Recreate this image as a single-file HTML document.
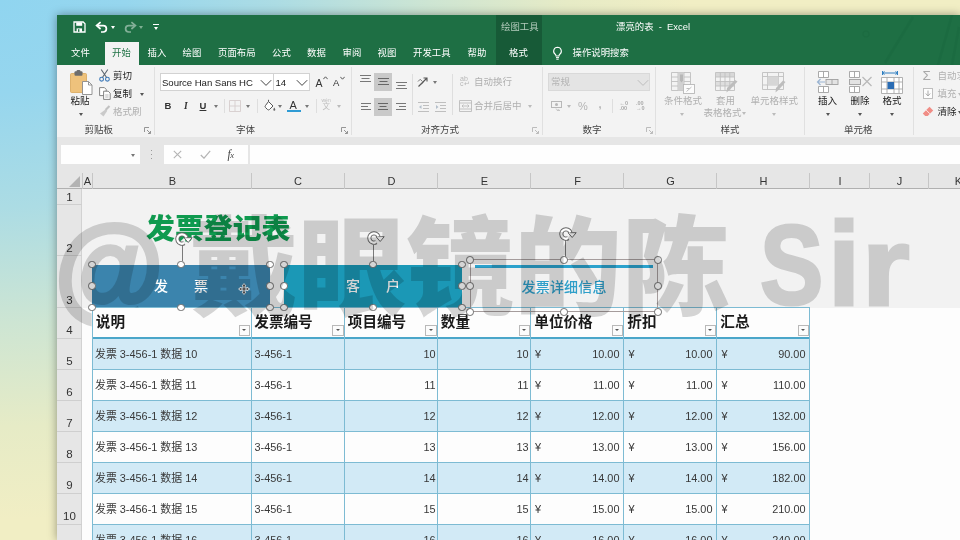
<!DOCTYPE html>
<html lang="zh-CN">
<head>
<meta charset="utf-8">
<title>漂亮的表 - Excel</title>
<style>
*{box-sizing:border-box;margin:0;padding:0}
html,body{width:960px;height:540px;overflow:hidden}
body{position:relative;font-family:"Liberation Sans","Noto Sans CJK SC",sans-serif;font-size:10px;color:#222;
 background:#f1eec4 radial-gradient(ellipse 690px 520px at 0 0,#90d5f0 0%,#96d6ee 18%,#acdce4 40%,#cde5d3 62%,#e6ebc6 82%,#f1eec4 100%);}
#win{position:absolute;left:57px;top:15px;width:903px;height:525px;background:#fdfdfd;box-shadow:0 0 9px rgba(0,0,0,.38);overflow:hidden}
#pg{position:absolute;left:-57px;top:-15px;width:960px;height:540px;will-change:transform}
#pg div,#pg span,#pg svg{position:absolute}
.t{white-space:nowrap;line-height:14px;height:14px}
/* title + tabs */
#titlebar{left:57px;top:15px;width:903px;height:50px;background:#1e6f44}
#ctx{left:496px;top:15px;width:45.5px;height:50px;background:#175a37}
#tabactive{left:105px;top:42px;width:34px;height:23px;background:#f3f3f3}
.tab{top:45.9px;color:#fff;font-size:9.4px}
/* ribbon */
#ribbon{left:57px;top:65px;width:903px;height:72px;background:#f3f3f3}
.gl{top:123px;font-size:9.5px;color:#444}
.rt{font-size:9.5px;color:#222}
.dis{color:#b0b0b0}
.sep{top:67px;width:1px;height:68px;background:#e0e0e0}
.vs{width:1px;height:14px;background:#dedede}
.dd{width:0;height:0;border-left:2.5px solid transparent;border-right:2.5px solid transparent;border-top:3px solid #555}
.dd.g{border-top-color:#bbb}
/* formula bar */
#fbar{left:57px;top:137px;width:903px;height:35px;background:#e6e6e6}
.wb{background:#fefefe;top:145.4px;height:18.8px}
/* grid */
#colhead{left:57px;top:172px;width:903px;height:17px;background:#e6e6e6;border-bottom:1px solid #b0b0b0}
.ch{top:174px;font-size:11px;color:#333;width:20px;text-align:center;margin-left:-10px}
.cs{top:172.5px;width:1px;height:16px;background:#c6c6c6}
#rowhead{left:57px;top:189px;width:25px;height:351px;background:#e6e6e6;border-right:1px solid #d2d2d2}
.rh{left:57px;width:25px;text-align:center;font-size:11.5px;margin-top:.5px;color:#333}
.rs{left:57px;width:25px;height:1px;background:#cfcfcf}
#graysheet{left:82px;top:189px;width:878px;height:118.5px;background:#f2f2f2}

/* table */
#tbl{left:92px;top:307px;width:718px;height:233px;background:#fdfdfd}
.band{left:92.5px;width:717px;height:31px;background:#d2eaf6}
.hl{left:92px;width:718px;height:1px;background:#7dbbd3}
.vl{top:307px;width:1px;height:233px;background:#7dbbd3}
.th{top:313.4px;margin-left:.3px;font-size:14.6px;font-weight:bold;color:#1a1a1a;line-height:18px;height:18px;white-space:nowrap}
.fb{margin-left:1px;top:324.7px;width:11.5px;height:11.5px;background:#fcfcfc;border:1px solid #b9b9b9}
.fb:after{content:"";position:absolute;left:2.5px;top:3.8px;border-left:2.3px solid transparent;border-right:2.3px solid transparent;border-top:2.8px solid #555}
.td{font-size:10.9px;color:#383838;line-height:16px;height:16px;white-space:nowrap}
.r{text-align:right}

/* shapes */
#ttl{left:146px;top:207.8px;font-size:28.9px;font-weight:900;color:#0f9a4f;line-height:42px;height:42px;white-space:nowrap}
.btn{top:264.5px;width:178px;height:42.5px;color:#fff;font-size:14px;font-weight:500;line-height:43px;text-align:center;white-space:pre;word-spacing:.45px}
.hd{width:7.6px;height:7.6px;margin:-3.8px 0 0 -3.8px;border-radius:50%;background:#fff;border:1px solid #6b6b6b}
.rl{width:1px;background:#7a7a7a;margin-left:-.5px}
.rot{margin:-8px 0 0 -8px}
#wm{left:0;top:0;width:960px;height:540px;opacity:.16;color:#000;font-weight:900;font-size:112px;pointer-events:none}
#wm span{white-space:nowrap;line-height:112px;height:112px}
#wm .lat{-webkit-text-stroke:3px #000}
</style>
</head>
<body>
<div id="win"><div id="pg">
 <div id="titlebar"></div>
 <div id="ctx"></div>
 <div id="tabactive"></div>
 <!--TITLE-->
 <svg style="left:860px;top:15px" width="100" height="50" viewBox="0 0 100 50"><path d="M53 2 25 48M92 0 78 50M99 12 92 50" stroke="#18633d" stroke-width="2.5" fill="none" opacity=".3"/><circle cx="6" cy="19" r="3" fill="none" stroke="#18633d" stroke-width="1.2" opacity=".3"/></svg>
 <!-- quick access toolbar -->
 <svg style="left:73px;top:21px" width="13" height="12" viewBox="0 0 13 12"><path d="M1 1h9.2l1.8 1.8V11H1z" fill="none" stroke="#fff" stroke-width="1.3"/><rect x="3.2" y="1.4" width="6" height="3.4" fill="#fff"/><rect x="3.6" y="7.4" width="5.4" height="3.4" fill="#fff"/><rect x="5" y="8.2" width="1.4" height="2.6" fill="#217346"/></svg>
 <svg style="left:95px;top:21px" width="14" height="12" viewBox="0 0 14 12"><path d="M3 4.6h5.2a3.2 3.2 0 0 1 0 6.4H6" fill="none" stroke="#fff" stroke-width="1.7"/><path d="M5.6 1.2 1.6 4.6l4 3.4" fill="none" stroke="#fff" stroke-width="1.7"/></svg>
 <div class="dd" style="left:111px;top:26px;border-top-color:#fff"></div>
 <svg style="left:123px;top:21px;opacity:.45" width="14" height="12" viewBox="0 0 14 12"><path d="M11 4.6H5.8a3.2 3.2 0 0 0 0 6.4H8" fill="none" stroke="#fff" stroke-width="1.7"/><path d="M8.4 1.2l4 3.4-4 3.4" fill="none" stroke="#fff" stroke-width="1.7"/></svg>
 <div class="dd" style="left:139px;top:26px;border-top-color:#7fb093"></div>
 <div style="left:153px;top:23.5px;width:6px;height:1.2px;background:#fff"></div>
 <div class="dd" style="left:153.5px;top:26.5px;border-top-color:#fff"></div>
 <!-- title -->
 <span class="t" style="left:501px;top:19.6px;font-size:9.4px;color:#b3cbbc">绘图工具</span>
 <span class="t" style="left:616px;top:19.6px;font-size:9.4px;color:#fff">漂亮的表 &nbsp;-&nbsp; Excel</span>
 <!-- tabs -->
 <span class="t tab" style="left:71px">文件</span>
 <span class="t tab" style="left:112px;color:#217346">开始</span>
 <span class="t tab" style="left:147.5px">插入</span>
 <span class="t tab" style="left:182.5px">绘图</span>
 <span class="t tab" style="left:218px">页面布局</span>
 <span class="t tab" style="left:272px">公式</span>
 <span class="t tab" style="left:307px">数据</span>
 <span class="t tab" style="left:342.5px">审阅</span>
 <span class="t tab" style="left:377.5px">视图</span>
 <span class="t tab" style="left:413px">开发工具</span>
 <span class="t tab" style="left:467.5px">帮助</span>
 <span class="t tab" style="left:509px">格式</span>
 <svg style="left:552px;top:46px" width="11" height="15" viewBox="0 0 11 15"><path d="M5.5 1.2a3.9 3.9 0 0 0-2.3 7c.5.5.8 1 .8 1.8h3c0-.8.3-1.3.8-1.8a3.9 3.9 0 0 0-2.3-7z" fill="none" stroke="#fff" stroke-width="1.1"/><path d="M4 11.6h3M4.3 13.2h2.4" stroke="#fff" stroke-width="1"/></svg>
 <span class="t tab" style="left:572.5px">操作说明搜索</span>
 <!--/TITLE-->
 <div id="ribbon"></div>
 <!--RIBBON-->
 <!-- clipboard group -->
 <svg style="left:69px;top:70px" width="25" height="26" viewBox="0 0 25 26"><rect x="1.5" y="3.5" width="16" height="19" rx="1" fill="#eec27c" stroke="#d9a75a" stroke-width=".8"/><rect x="5.5" y="1.2" width="8" height="4.6" rx="1" fill="#6d6d6d"/><rect x="7.5" y="0" width="4" height="3" rx="1.2" fill="#6d6d6d"/><path d="M13.5 11.5h6l3.5 3.5v9.5h-9.5z" fill="#fff" stroke="#8a8a8a" stroke-width=".9"/><path d="M19.5 11.5v3.5h3.5" fill="none" stroke="#8a8a8a" stroke-width=".9"/></svg>
 <span class="t rt" style="left:70.5px;top:94px">粘贴</span>
 <div class="dd" style="left:78.5px;top:112.5px"></div>
 <svg style="left:99px;top:69px" width="11" height="13" viewBox="0 0 11 13"><path d="M2.2 0.5 7.8 8.8M8.8 0.5 3.2 8.8" stroke="#5a6570" stroke-width="1.1" fill="none"/><circle cx="2.6" cy="10.2" r="1.9" fill="none" stroke="#3b78b8" stroke-width="1.1"/><circle cx="8.4" cy="10.2" r="1.9" fill="none" stroke="#3b78b8" stroke-width="1.1"/></svg>
 <span class="t rt" style="left:113px;top:68.5px">剪切</span>
 <svg style="left:99px;top:87px" width="12" height="13" viewBox="0 0 12 13"><path d="M.6.6h4.8l1.8 1.8v6.2H.6z" fill="#fff" stroke="#777" stroke-width=".9"/><path d="M4.6 4.2h4.6l2 2v6.2H4.6z" fill="#fff" stroke="#777" stroke-width=".9"/><path d="M6.2 8h3.4M6.2 10h3.4" stroke="#999" stroke-width=".7"/></svg>
 <span class="t rt" style="left:113px;top:87px">复制</span>
 <div class="dd" style="left:139.5px;top:93px"></div>
 <svg style="left:99px;top:105px;opacity:.55" width="12" height="13" viewBox="0 0 12 13"><path d="M10.5 1 6.5 5" stroke="#999" stroke-width="2.2"/><path d="M6.8 4.2 8.3 5.8 4.5 11.5 1 8.5z" fill="#aaa"/></svg>
 <span class="t rt dis" style="left:113px;top:104.5px">格式刷</span>
 <span class="t gl" style="left:84.5px">剪贴板</span>
 <svg class="ln" style="left:144px;top:127px" width="7" height="7" viewBox="0 0 7 7"><path d="M.5 5V.5H5" fill="none" stroke="#8a8a8a" stroke-width=".9"/><path d="M3 3l3.3 3.3M6.5 4v2.5H4" fill="none" stroke="#8a8a8a" stroke-width=".9"/></svg>
 <div class="sep" style="left:153.5px"></div>
 <!-- font group -->
 <div style="left:160px;top:73.2px;width:113.5px;height:18px;background:#fff;border:1px solid #d2d2d2"></div>
 <div style="left:272.5px;top:73.2px;width:37.5px;height:18px;background:#fff;border:1px solid #d2d2d2"></div>
 <span class="t" style="left:162px;top:75.5px;font-size:9.6px;color:#222;letter-spacing:-.05px">Source Han Sans HC</span>
 <svg style="left:259.5px;top:78.5px" width="12" height="8" viewBox="0 0 12 8"><path d="M.8 1.2 6 6.4l5.2-5.2" fill="none" stroke="#444" stroke-width="1"/></svg>
 <span class="t" style="left:275.5px;top:75.5px;font-size:9.6px;color:#222">14</span>
 <svg style="left:296px;top:78.5px" width="12" height="8" viewBox="0 0 12 8"><path d="M.8 1.2 6 6.4l5.2-5.2" fill="none" stroke="#444" stroke-width="1"/></svg>
 <span class="t" style="left:315.5px;top:75.5px;font-size:10.5px;color:#333">A</span>
 <svg style="left:322.5px;top:76px" width="5" height="4" viewBox="0 0 5 4"><path d="M.3 3.2 2.5.8l2.2 2.4" fill="none" stroke="#444" stroke-width=".9"/></svg>
 <span class="t" style="left:333px;top:76px;font-size:9.5px;color:#333">A</span>
 <svg style="left:339.5px;top:76px" width="5" height="4" viewBox="0 0 5 4"><path d="M.3.8 2.5 3.2 4.7.8" fill="none" stroke="#444" stroke-width=".9"/></svg>
 <span class="t" style="left:164.5px;top:98.7px;font-size:9.5px;font-weight:bold;color:#333">B</span>
 <span class="t" style="left:184px;top:98.7px;font-size:9.5px;font-style:italic;font-weight:bold;color:#333;font-family:'Liberation Serif',serif">I</span>
 <span class="t" style="left:199.5px;top:98.7px;font-size:9.5px;color:#333;font-weight:bold;text-decoration:underline">U</span>
 <div class="dd" style="left:213.5px;top:105px;border-top-color:#777"></div>
 <div class="vs" style="left:223.5px;top:99px"></div>
 <svg style="left:229px;top:100px;opacity:.5" width="12" height="12" viewBox="0 0 12 12"><path d="M.5.5h11v11H.5zM6 .5v11M.5 6h11" fill="none" stroke="#b9a8a8" stroke-width=".9"/></svg>
 <div class="dd" style="left:245.5px;top:105px;border-top-color:#777"></div>
 <div class="vs" style="left:256.5px;top:99px"></div>
 <svg style="left:262.5px;top:99px" width="13" height="13" viewBox="0 0 13 13"><path d="M5.5 2.5 10 7 6.5 10.5a1.5 1.5 0 0 1-2 0L2.5 8.5a1.5 1.5 0 0 1 0-2z" fill="#fff" stroke="#555" stroke-width="1"/><path d="M5.5 2.5V.8" stroke="#555" stroke-width="1"/><path d="M11.3 8.5c.8 1.2 1 1.8 1 2.3a1 1 0 0 1-2 0c0-.5.2-1.1 1-2.3z" fill="#666"/></svg>
 <div class="dd" style="left:277.5px;top:105px;border-top-color:#777"></div>
 <span class="t" style="left:289.5px;top:97.5px;font-size:11px;color:#333">A</span>
 <div style="left:287px;top:109.5px;width:13.5px;height:2.8px;background:#2f9bd4"></div>
 <div class="dd" style="left:305px;top:105px;border-top-color:#777"></div>
 <div class="vs" style="left:315.5px;top:99px"></div>
 <span class="t dis" style="left:321.5px;top:97px;font-size:5px;line-height:6px;height:6px;color:#bdbdbd">wén</span>
 <span class="t dis" style="left:322.5px;top:102px;font-size:7.5px;line-height:9px;height:9px;color:#bdbdbd">文</span>
 <div class="dd g" style="left:337px;top:105px"></div>
 <span class="t gl" style="left:236px">字体</span>
 <svg style="left:341px;top:127px" width="7" height="7" viewBox="0 0 7 7"><path d="M.5 5V.5H5" fill="none" stroke="#8a8a8a" stroke-width=".9"/><path d="M3 3l3.3 3.3M6.5 4v2.5H4" fill="none" stroke="#8a8a8a" stroke-width=".9"/></svg>
 <div class="sep" style="left:350.5px"></div>
 <!-- alignment group -->
 <div style="left:374px;top:73px;width:18px;height:18px;background:#c9c9c9"></div>
 <div style="left:374px;top:97.5px;width:18px;height:18px;background:#c9c9c9"></div>
 <svg style="left:360px;top:74px" width="11" height="10" viewBox="0 0 11 10"><path d="M0 1.5h11M1.5 4.5h8M0 7.5h11" stroke="#777" stroke-width="1"/></svg>
 <svg style="left:377.5px;top:77px" width="11" height="10" viewBox="0 0 11 10"><path d="M0 1.5h11M1.5 4.5h8M0 7.5h11" stroke="#666" stroke-width="1"/></svg>
 <svg style="left:395.5px;top:80.5px" width="11" height="10" viewBox="0 0 11 10"><path d="M0 1.5h11M1.5 4.5h8M0 7.5h11" stroke="#777" stroke-width="1"/></svg>
 <svg style="left:360.5px;top:101.5px" width="10" height="10" viewBox="0 0 10 10"><path d="M0 1.5h10M0 4.5h7M0 7.5h10" stroke="#777" stroke-width="1"/></svg>
 <svg style="left:378px;top:101.5px" width="10" height="10" viewBox="0 0 10 10"><path d="M0 1.5h10M1.5 4.5h7M0 7.5h10" stroke="#666" stroke-width="1"/></svg>
 <svg style="left:395.5px;top:101.5px" width="10" height="10" viewBox="0 0 10 10"><path d="M0 1.5h10M3 4.5h7M0 7.5h10" stroke="#777" stroke-width="1"/></svg>
 <div class="vs" style="left:411.5px;top:74px;height:41px"></div>
 <svg style="left:416.5px;top:75px" width="13" height="13" viewBox="0 0 13 13"><path d="M1.5 11.5 9.5 3.5M6.5 3h3.5v3.5" fill="none" stroke="#555" stroke-width="1.1"/><path d="M1 6.5 3.2 4.3 5.4 6.5M4 9.5 6.2 7.3" fill="none" stroke="#666" stroke-width=".9"/></svg>
 <div class="dd" style="left:432.5px;top:80.5px;border-top-color:#777"></div>
 <svg style="left:418px;top:101.5px;opacity:.7" width="11" height="10" viewBox="0 0 11 10"><path d="M0 .5h11M5 3.5h6M5 6.5h6M0 9.5h11" stroke="#aaa" stroke-width="1"/><path d="M3.5 3 1 5l2.5 2z" fill="#9ab"/></svg>
 <svg style="left:434.5px;top:101.5px;opacity:.7" width="11" height="10" viewBox="0 0 11 10"><path d="M0 .5h11M5 3.5h6M5 6.5h6M0 9.5h11" stroke="#aaa" stroke-width="1"/><path d="M1 3l2.5 2L1 7z" fill="#9ab"/></svg>
 <div class="vs" style="left:452px;top:74px;height:41px"></div>
 <span class="t dis" style="left:460px;top:75.5px;font-size:7px;line-height:5.8px;height:12px;color:#b8b8b8;white-space:pre">ab
c↵</span>
 <span class="t rt dis" style="left:474px;top:74.5px">自动换行</span>
 <svg style="left:458.5px;top:100px;opacity:.75" width="13" height="12" viewBox="0 0 13 12"><path d="M.5.5h12v11H.5zM.5 3h12M.5 9h12" fill="none" stroke="#aaa" stroke-width=".9"/><path d="M3 6h7M4.5 4.5 3 6l1.5 1.5M8.5 4.5 10 6 8.5 7.5" fill="none" stroke="#aaa" stroke-width=".9"/></svg>
 <span class="t rt dis" style="left:474px;top:99px">合并后居中</span>
 <div class="dd g" style="left:528px;top:105px"></div>
 <span class="t gl" style="left:421px">对齐方式</span>
 <svg style="left:532px;top:127px" width="7" height="7" viewBox="0 0 7 7"><path d="M.5 5V.5H5" fill="none" stroke="#b5b5b5" stroke-width=".9"/><path d="M3 3l3.3 3.3M6.5 4v2.5H4" fill="none" stroke="#b5b5b5" stroke-width=".9"/></svg>
 <div class="sep" style="left:542px"></div>
 <!-- number group -->
 <div style="left:548px;top:72.8px;width:102px;height:18px;background:#e4e4e4;border:1px solid #d9d9d9"></div>
 <span class="t rt dis" style="left:551px;top:75px;color:#b4b4b4">常规</span>
 <svg style="left:636.5px;top:78.5px" width="12" height="8" viewBox="0 0 12 8"><path d="M.8 1.2 6 6.4l5.2-5.2" fill="none" stroke="#bdbdbd" stroke-width="1"/></svg>
 <svg style="left:550.5px;top:100px;opacity:.8" width="12" height="12" viewBox="0 0 12 12"><rect x=".5" y="1.5" width="10" height="6" fill="none" stroke="#aaa" stroke-width="1"/><circle cx="5.5" cy="4.5" r="1.5" fill="#aaa"/><path d="M5 8.5c0 2 3 2 3 .5M6 10.5h3" stroke="#b5b5b5" stroke-width=".9" fill="none"/></svg>
 <div class="dd g" style="left:566.5px;top:105px"></div>
 <span class="t dis" style="left:578px;top:99px;font-size:11px;color:#b4b4b4">%</span>
 <span class="t dis" style="left:598.5px;top:97px;font-size:11px;font-weight:bold;color:#b4b4b4">,</span>
 <div class="vs" style="left:611.5px;top:99px"></div>
 <span class="t dis" style="left:619.5px;top:100.5px;font-size:5.5px;line-height:5.5px;height:12px;color:#aaa;white-space:pre;font-weight:bold">←0
.00</span>
 <span class="t dis" style="left:636px;top:100.5px;font-size:5.5px;line-height:5.5px;height:12px;color:#aaa;white-space:pre;font-weight:bold">.00
→0</span>
 <span class="t gl" style="left:582.5px">数字</span>
 <svg style="left:646px;top:127px" width="7" height="7" viewBox="0 0 7 7"><path d="M.5 5V.5H5" fill="none" stroke="#b5b5b5" stroke-width=".9"/><path d="M3 3l3.3 3.3M6.5 4v2.5H4" fill="none" stroke="#b5b5b5" stroke-width=".9"/></svg>
 <div class="sep" style="left:655px"></div>
 <!-- styles group -->
 <svg style="left:670.5px;top:72px;opacity:.8" width="25" height="23" viewBox="0 0 25 23"><path d="M.5.5h19v18H.5zM.5 5h19M.5 9.5h19M.5 14h19M7 .5v18M13 .5v18" fill="none" stroke="#b3b3b3" stroke-width=".9"/><rect x="7" y=".5" width="6" height="18" fill="#c9c9c9"/><path d="M9 2.5h3v6l-1.5 2-1.5-2z" fill="#a9a9a9"/><rect x="12.5" y="12.5" width="11" height="9" fill="#fff" stroke="#aaa" stroke-width=".9"/><path d="M15.5 19.5 20.5 15M15.5 16.5h3" stroke="#aaa" stroke-width=".9"/></svg>
 <span class="t rt dis" style="left:664px;top:94px">条件格式</span>
 <div class="dd g" style="left:680px;top:113px"></div>
 <svg style="left:714.5px;top:72px;opacity:.8" width="25" height="23" viewBox="0 0 25 23"><rect x=".5" y=".5" width="19" height="4.5" fill="#d2d2d2"/><rect x=".5" y="9.5" width="19" height="4.5" fill="#d9d9d9"/><path d="M.5.5h19v18H.5zM.5 5h19M.5 9.5h19M.5 14h19M5.3.5v18M10 .5v18M14.8.5v18" fill="none" stroke="#b3b3b3" stroke-width=".9"/><path d="M22.5 9.5 15 17.5l-3.5 3 .5-4.5 8-8z" fill="#b0b0b0"/></svg>
 <span class="t rt dis" style="left:716px;top:94px">套用</span>
 <span class="t rt dis" style="left:703.5px;top:106px">表格格式</span>
 <div class="dd g" style="left:742px;top:112px"></div>
 <svg style="left:762px;top:72px;opacity:.8" width="25" height="23" viewBox="0 0 25 23"><path d="M.5.5h21v17H.5zM.5 4.5h21M.5 13h21M5.5.5v17M16.5.5v17" fill="none" stroke="#b3b3b3" stroke-width=".9"/><rect x="5.5" y="4.5" width="11" height="8.5" fill="#cfcfcf"/><path d="M23.5 10 17 17.5l-3.5 3 .5-4.5 7-7.5z" fill="#b0b0b0"/></svg>
 <span class="t rt dis" style="left:750.5px;top:94px">单元格样式</span>
 <div class="dd g" style="left:771.5px;top:113px"></div>
 <span class="t gl" style="left:720.5px">样式</span>
 <div class="sep" style="left:804px"></div>
 <!-- cells group -->
 <svg style="left:815.5px;top:71px" width="23" height="23" viewBox="0 0 23 23"><path d="M2.5.5h10v6h-10zM7.5.5v6M2.5 15.5h10v6h-10zM7.5 15.5v6" fill="#fff" stroke="#a0a0a0" stroke-width=".9"/><rect x="10" y="8.5" width="12" height="5" fill="#e3e3e3" stroke="#a0a0a0" stroke-width=".9"/><path d="M16 8.5v5" stroke="#a0a0a0" stroke-width=".9"/><path d="M9 11H1.5M4.5 8 1.5 11l3 3" fill="none" stroke="#9ab4d2" stroke-width="1.2"/></svg>
 <span class="t rt" style="left:818px;top:94px">插入</span>
 <div class="dd" style="left:826px;top:113px"></div>
 <svg style="left:848.5px;top:71px" width="24" height="23" viewBox="0 0 24 23"><path d="M.5.5h10v6H.5zM5.5.5v6M.5 15.5h10v6H.5zM5.5 15.5v6" fill="#fff" stroke="#a0a0a0" stroke-width=".9"/><rect x=".5" y="8.5" width="11" height="5" fill="#e3e3e3" stroke="#a0a0a0" stroke-width=".9"/><path d="M13.5 6 22.5 15M22.5 6 13.5 15" stroke="#b9b9b9" stroke-width="1.3"/></svg>
 <span class="t rt" style="left:850.5px;top:94px">删除</span>
 <div class="dd" style="left:858px;top:113px"></div>
 <svg style="left:880.5px;top:70px" width="23" height="24" viewBox="0 0 23 24"><path d="M1.5 3h15M1.5 1v4M16.5 1v4M3.5 1.5 1.5 3l2 1.5M14.5 1.5l2 1.5-2 1.5" fill="none" stroke="#2f7fc1" stroke-width="1"/><path d="M.5 7.5h21v16H.5zM.5 12h21M.5 19h21M6 7.5v16M13 7.5v16M18 7.5v16" fill="#fff" stroke="#a8a8a8" stroke-width=".9"/><rect x="6.5" y="12" width="6.5" height="7" fill="#2b6cb3"/></svg>
 <span class="t rt" style="left:882.5px;top:94px">格式</span>
 <div class="dd" style="left:890px;top:113px"></div>
 <span class="t gl" style="left:844px">单元格</span>
 <div class="sep" style="left:913px"></div>
 <!-- editing group -->
 <span class="t dis" style="left:922.5px;top:68.5px;font-size:13.5px;color:#a8a8a8">Σ</span>
 <span class="t rt dis" style="left:937.5px;top:68.5px">自动求和</span>
 <svg style="left:922.5px;top:88px;opacity:.8" width="10" height="11" viewBox="0 0 10 11"><rect x=".5" y=".5" width="9" height="10" fill="#fff" stroke="#aaa" stroke-width=".9"/><path d="M5 2.5v5M2.8 5.5 5 8l2.2-2.5" fill="none" stroke="#999" stroke-width="1"/></svg>
 <span class="t rt dis" style="left:937.5px;top:87px">填充</span>
 <div class="dd g" style="left:957.5px;top:93px"></div>
 <svg style="left:921.5px;top:106px" width="12" height="11" viewBox="0 0 12 11"><path d="M7.5.8 11.2 4.5 5.7 10H3.2L.8 7.5z" fill="#f08d86"/><path d="M4.2 4.1 7.9 7.8" stroke="#fff" stroke-width=".8"/></svg>
 <span class="t rt" style="left:937.5px;top:104.5px">清除</span>
 <div class="dd" style="left:957.5px;top:111px"></div>
 <!--/RIBBON-->
 <div id="fbar"></div>
 <!--FBAR-->
 <div class="wb" style="left:61px;width:78.5px"></div>
 <div class="dd" style="left:130.5px;top:153.5px;border-top-color:#777"></div>
 <div style="left:150.5px;top:150px;width:1.2px;height:1.2px;background:#9a9a9a;box-shadow:0 4px 0 #9a9a9a,0 8px 0 #9a9a9a"></div>
 <div class="wb" style="left:163.5px;width:84px"></div>
 <svg style="left:172.5px;top:150px" width="9" height="9" viewBox="0 0 9 9"><path d="M.8.8l7.4 7.4M8.2.8.8 8.2" stroke="#b4b4b4" stroke-width="1.1"/></svg>
 <svg style="left:199.5px;top:150px" width="11" height="9" viewBox="0 0 11 9"><path d="M.8 5l3.2 3.2L10.2.8" fill="none" stroke="#b4b4b4" stroke-width="1.2"/></svg>
 <span class="t" style="left:227.5px;top:147px;font-size:11.5px;font-style:italic;color:#444;font-family:'Liberation Serif',serif;letter-spacing:-.5px">f<span style="position:static;font-size:8.5px">x</span></span>
 <div class="wb" style="left:250px;width:710px"></div>
 <div id="colhead"></div>
 <div id="rowhead"></div>
 <div id="graysheet"></div>
 <!--GRID-->
 <svg style="left:69px;top:175.5px" width="11" height="11" viewBox="0 0 11 11"><path d="M11 0v11H0z" fill="#b3b3b3"/></svg>
 <span class="t ch" style="left:87.5px">A</span>
 <span class="t ch" style="left:172.5px">B</span>
 <span class="t ch" style="left:298px">C</span>
 <span class="t ch" style="left:391.5px">D</span>
 <span class="t ch" style="left:484.5px">E</span>
 <span class="t ch" style="left:577.5px">F</span>
 <span class="t ch" style="left:670.5px">G</span>
 <span class="t ch" style="left:763.5px">H</span>
 <span class="t ch" style="left:840px">I</span>
 <span class="t ch" style="left:899.5px">J</span>
 <span class="t ch" style="left:958.5px">K</span>
 <div class="cs" style="left:81.5px"></div>
 <div class="cs" style="left:92px"></div>
 <div class="cs" style="left:251px"></div>
 <div class="cs" style="left:344px"></div>
 <div class="cs" style="left:437px"></div>
 <div class="cs" style="left:530px"></div>
 <div class="cs" style="left:623px"></div>
 <div class="cs" style="left:716px"></div>
 <div class="cs" style="left:809px"></div>
 <div class="cs" style="left:869px"></div>
 <div class="cs" style="left:928px"></div>
 <span class="t rh" style="top:189px">1</span>
 <div class="rs" style="top:204px"></div>
 <span class="t rh" style="top:240px">2</span>
 <div class="rs" style="top:255px"></div>
 <span class="t rh" style="top:292px">3</span>
 <div class="rs" style="top:307px"></div>
 <span class="t rh" style="top:322.5px">4</span>
 <div class="rs" style="top:337.5px"></div>
 <span class="t rh" style="top:353.5px">5</span>
 <div class="rs" style="top:368.5px"></div>
 <span class="t rh" style="top:384.5px">6</span>
 <div class="rs" style="top:399.5px"></div>
 <span class="t rh" style="top:415.5px">7</span>
 <div class="rs" style="top:430.5px"></div>
 <span class="t rh" style="top:446.5px">8</span>
 <div class="rs" style="top:461.5px"></div>
 <span class="t rh" style="top:477.5px">9</span>
 <div class="rs" style="top:492.5px"></div>
 <span class="t rh" style="top:508.5px">10</span>
 <div class="rs" style="top:523.5px"></div>
 <!--TABLE-->
 <div id="tbl"></div>
 <div class="band" style="top:338px"></div>
 <div class="band" style="top:400px"></div>
 <div class="band" style="top:462px"></div>
 <div class="band" style="top:524px"></div>
 <div class="hl" style="top:307px"></div>
 <div class="hl" style="top:368.5px"></div>
 <div class="hl" style="top:399.5px"></div>
 <div class="hl" style="top:430.5px"></div>
 <div class="hl" style="top:461.5px"></div>
 <div class="hl" style="top:492.5px"></div>
 <div class="hl" style="top:523.5px"></div>
 <div class="hl" style="top:336.5px;height:2px;background:#4ba6c9"></div>
 <div class="vl" style="left:92px"></div>
 <div class="vl" style="left:251px"></div>
 <div class="vl" style="left:344px"></div>
 <div class="vl" style="left:437px"></div>
 <div class="vl" style="left:530px"></div>
 <div class="vl" style="left:623px"></div>
 <div class="vl" style="left:716px"></div>
 <div class="vl" style="left:809px"></div>
 <span class="th" style="left:95.5px">说明</span>
 <div class="fb" style="left:237.5px"></div>
 <span class="th" style="left:254px">发票编号</span>
 <div class="fb" style="left:331px"></div>
 <span class="th" style="left:347.5px">项目编号</span>
 <div class="fb" style="left:424px"></div>
 <span class="th" style="left:440.5px">数量</span>
 <div class="fb" style="left:517.5px"></div>
 <span class="th" style="left:534px">单位价格</span>
 <div class="fb" style="left:610.5px"></div>
 <span class="th" style="left:627px">折扣</span>
 <div class="fb" style="left:703.5px"></div>
 <span class="th" style="left:720px">汇总</span>
 <div class="fb" style="left:796.5px"></div>
 <span class="td" style="left:95px;top:345.5px">发票 3-456-1 数据 10</span>
 <span class="td" style="left:254.5px;top:345.5px">3-456-1</span>
 <span class="td r" style="left:345px;width:90.5px;top:345.5px">10</span>
 <span class="td r" style="left:438px;width:90.5px;top:345.5px">10</span>
 <span class="td" style="left:535px;top:345.5px">¥</span>
 <span class="td r" style="left:545px;width:74.5px;top:345.5px">10.00</span>
 <span class="td" style="left:628.5px;top:345.5px">¥</span>
 <span class="td r" style="left:638px;width:74.5px;top:345.5px">10.00</span>
 <span class="td" style="left:721.5px;top:345.5px">¥</span>
 <span class="td r" style="left:731px;width:74.5px;top:345.5px">90.00</span>
 <span class="td" style="left:95px;top:376.5px">发票 3-456-1 数据 11</span>
 <span class="td" style="left:254.5px;top:376.5px">3-456-1</span>
 <span class="td r" style="left:345px;width:90.5px;top:376.5px">11</span>
 <span class="td r" style="left:438px;width:90.5px;top:376.5px">11</span>
 <span class="td" style="left:535px;top:376.5px">¥</span>
 <span class="td r" style="left:545px;width:74.5px;top:376.5px">11.00</span>
 <span class="td" style="left:628.5px;top:376.5px">¥</span>
 <span class="td r" style="left:638px;width:74.5px;top:376.5px">11.00</span>
 <span class="td" style="left:721.5px;top:376.5px">¥</span>
 <span class="td r" style="left:731px;width:74.5px;top:376.5px">110.00</span>
 <span class="td" style="left:95px;top:407.5px">发票 3-456-1 数据 12</span>
 <span class="td" style="left:254.5px;top:407.5px">3-456-1</span>
 <span class="td r" style="left:345px;width:90.5px;top:407.5px">12</span>
 <span class="td r" style="left:438px;width:90.5px;top:407.5px">12</span>
 <span class="td" style="left:535px;top:407.5px">¥</span>
 <span class="td r" style="left:545px;width:74.5px;top:407.5px">12.00</span>
 <span class="td" style="left:628.5px;top:407.5px">¥</span>
 <span class="td r" style="left:638px;width:74.5px;top:407.5px">12.00</span>
 <span class="td" style="left:721.5px;top:407.5px">¥</span>
 <span class="td r" style="left:731px;width:74.5px;top:407.5px">132.00</span>
 <span class="td" style="left:95px;top:438.5px">发票 3-456-1 数据 13</span>
 <span class="td" style="left:254.5px;top:438.5px">3-456-1</span>
 <span class="td r" style="left:345px;width:90.5px;top:438.5px">13</span>
 <span class="td r" style="left:438px;width:90.5px;top:438.5px">13</span>
 <span class="td" style="left:535px;top:438.5px">¥</span>
 <span class="td r" style="left:545px;width:74.5px;top:438.5px">13.00</span>
 <span class="td" style="left:628.5px;top:438.5px">¥</span>
 <span class="td r" style="left:638px;width:74.5px;top:438.5px">13.00</span>
 <span class="td" style="left:721.5px;top:438.5px">¥</span>
 <span class="td r" style="left:731px;width:74.5px;top:438.5px">156.00</span>
 <span class="td" style="left:95px;top:469.5px">发票 3-456-1 数据 14</span>
 <span class="td" style="left:254.5px;top:469.5px">3-456-1</span>
 <span class="td r" style="left:345px;width:90.5px;top:469.5px">14</span>
 <span class="td r" style="left:438px;width:90.5px;top:469.5px">14</span>
 <span class="td" style="left:535px;top:469.5px">¥</span>
 <span class="td r" style="left:545px;width:74.5px;top:469.5px">14.00</span>
 <span class="td" style="left:628.5px;top:469.5px">¥</span>
 <span class="td r" style="left:638px;width:74.5px;top:469.5px">14.00</span>
 <span class="td" style="left:721.5px;top:469.5px">¥</span>
 <span class="td r" style="left:731px;width:74.5px;top:469.5px">182.00</span>
 <span class="td" style="left:95px;top:500.5px">发票 3-456-1 数据 15</span>
 <span class="td" style="left:254.5px;top:500.5px">3-456-1</span>
 <span class="td r" style="left:345px;width:90.5px;top:500.5px">15</span>
 <span class="td r" style="left:438px;width:90.5px;top:500.5px">15</span>
 <span class="td" style="left:535px;top:500.5px">¥</span>
 <span class="td r" style="left:545px;width:74.5px;top:500.5px">15.00</span>
 <span class="td" style="left:628.5px;top:500.5px">¥</span>
 <span class="td r" style="left:638px;width:74.5px;top:500.5px">15.00</span>
 <span class="td" style="left:721.5px;top:500.5px">¥</span>
 <span class="td r" style="left:731px;width:74.5px;top:500.5px">210.00</span>
 <span class="td" style="left:95px;top:531.5px">发票 3-456-1 数据 16</span>
 <span class="td" style="left:254.5px;top:531.5px">3-456-1</span>
 <span class="td r" style="left:345px;width:90.5px;top:531.5px">16</span>
 <span class="td r" style="left:438px;width:90.5px;top:531.5px">16</span>
 <span class="td" style="left:535px;top:531.5px">¥</span>
 <span class="td r" style="left:545px;width:74.5px;top:531.5px">16.00</span>
 <span class="td" style="left:628.5px;top:531.5px">¥</span>
 <span class="td r" style="left:638px;width:74.5px;top:531.5px">16.00</span>
 <span class="td" style="left:721.5px;top:531.5px">¥</span>
 <span class="td r" style="left:731px;width:74.5px;top:531.5px">240.00</span>
 <!--SHAPES-->
 <span id="ttl">发票登记表</span>
 <div class="btn" style="left:92px;background:#3b84ad">发      票</div>
 <div class="btn" style="left:284px;background:#1b98b6">客      户</div>
 <div style="left:470px;top:259.3px;width:188px;height:52.7px;border:1px solid #a59c9c"></div>
 <div style="left:475px;top:265.2px;width:177.5px;height:3px;background:#2ba2cd"></div>
 <span class="t" style="left:521.5px;top:277px;font-size:14px;font-weight:500;line-height:20px;height:20px;color:#2f9fc9;letter-spacing:.2px">发票详细信息</span>
 <div class="rl" style="left:182px;top:245px;height:16px"></div>
 <svg class="rot" style="left:182px;top:238.5px" width="20" height="16" viewBox="-8 -8 20 16"><path d="M4.4 -1.6A4.7 4.7 0 1 0 2.3 4.1" fill="none" stroke="#666" stroke-width="4.2"/><path d="M2 -1.3h8.2L6.2 3.5z" fill="#fff" stroke="#666" stroke-width="1"/><path d="M4.4 -1.6A4.7 4.7 0 1 0 2.3 4.1" fill="none" stroke="#fff" stroke-width="2.3"/></svg>
 <div class="hd" style="left:92px;top:264.5px"></div>
 <div class="hd" style="left:181px;top:264.5px"></div>
 <div class="hd" style="left:270px;top:264.5px"></div>
 <div class="hd" style="left:92px;top:286px"></div>
 <div class="hd" style="left:270px;top:286px"></div>
 <div class="hd" style="left:92px;top:307.5px"></div>
 <div class="hd" style="left:181px;top:307.5px"></div>
 <div class="hd" style="left:270px;top:307.5px"></div>
 <div class="rl" style="left:373px;top:245px;height:16px"></div>
 <svg class="rot" style="left:373.5px;top:238px" width="20" height="16" viewBox="-8 -8 20 16"><path d="M4.4 -1.6A4.7 4.7 0 1 0 2.3 4.1" fill="none" stroke="#666" stroke-width="4.2"/><path d="M2 -1.3h8.2L6.2 3.5z" fill="#fff" stroke="#666" stroke-width="1"/><path d="M4.4 -1.6A4.7 4.7 0 1 0 2.3 4.1" fill="none" stroke="#fff" stroke-width="2.3"/></svg>
 <div class="hd" style="left:284px;top:264.5px"></div>
 <div class="hd" style="left:373px;top:264.5px"></div>
 <div class="hd" style="left:462px;top:264.5px"></div>
 <div class="hd" style="left:284px;top:286px"></div>
 <div class="hd" style="left:462px;top:286px"></div>
 <div class="hd" style="left:284px;top:307.5px"></div>
 <div class="hd" style="left:373px;top:307.5px"></div>
 <div class="hd" style="left:462px;top:307.5px"></div>
 <div class="rl" style="left:565px;top:240px;height:17px"></div>
 <svg class="rot" style="left:565.5px;top:233.5px" width="20" height="16" viewBox="-8 -8 20 16"><path d="M4.4 -1.6A4.7 4.7 0 1 0 2.3 4.1" fill="none" stroke="#666" stroke-width="4.2"/><path d="M2 -1.3h8.2L6.2 3.5z" fill="#fff" stroke="#666" stroke-width="1"/><path d="M4.4 -1.6A4.7 4.7 0 1 0 2.3 4.1" fill="none" stroke="#fff" stroke-width="2.3"/></svg>
 <div class="hd" style="left:470px;top:260px"></div>
 <div class="hd" style="left:564px;top:260px"></div>
 <div class="hd" style="left:658px;top:260px"></div>
 <div class="hd" style="left:470px;top:286px"></div>
 <div class="hd" style="left:658px;top:286px"></div>
 <div class="hd" style="left:470px;top:312px"></div>
 <div class="hd" style="left:564px;top:312px"></div>
 <div class="hd" style="left:658px;top:312px"></div>
 <svg style="left:238px;top:283px" width="12" height="12" viewBox="0 0 12 12"><path d="M6 .5 8 3H7v2h2V4l2.5 2L9 8V7H7v2h1L6 11.5 4 9h1V7H3v1L.5 6 3 4v1h2V3H4z" fill="#555" stroke="#fff" stroke-width=".8"/></svg>
 <!--WATERMARK-->
 <div id="wm">
  <span id="wm1" class="lat" style="left:54.5px;top:209px;font-size:112px;-webkit-text-stroke-width:4px;transform:scaleY(1.04);transform-origin:0 0;clip-path:polygon(-20px -20px,200px -20px,200px 94.7px,37.2px 94.7px,37.2px 200px,-20px 200px)">@</span>
  <span id="wm2" style="left:190.1px;top:213.5px;font-size:108px">戴眼镜的陈</span>
  <span id="wm3" style="left:760px;top:205px"><span id="wm3s" class="lat" style="left:0px;top:3.5px;font-size:113px;transform:scaleX(.84);transform-origin:0 0">S</span><span id="wm3i" class="lat" style="left:68px;top:4px;font-size:116px;transform:scaleY(1.03);transform-origin:0 100%">i</span><span id="wm3r" class="lat" style="left:102px;top:6px;font-size:111px;transform:scaleX(1.1);transform-origin:0 0">r</span></span>
 </div>
</div></div>
</body>
</html>
